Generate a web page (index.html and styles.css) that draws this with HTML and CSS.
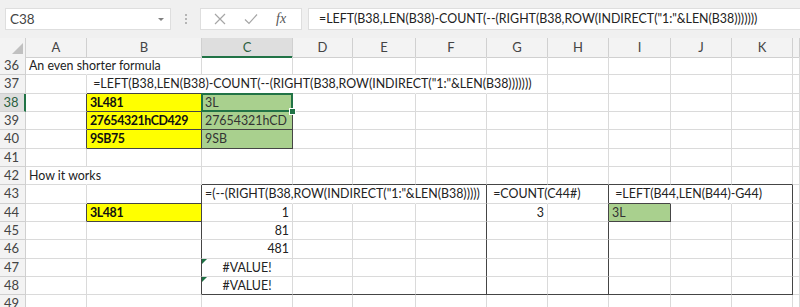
FILE: index.html
```html
<!DOCTYPE html>
<html lang="en">
<head>
    <meta charset="utf-8">
    <title>Sheet</title>
    <link rel="stylesheet" href="styles.css">
</head>
<body>
    <!-- formula bar -->
    <div class="formula-bar">
        <div class="name-box"><span>C38</span><span class="drop"></span></div>
        <div class="grip"><i></i><i></i><i></i></div>
        <div class="fx-box">
            <svg width="12" height="12" viewBox="0 0 12 12"><path d="M1 1L11 11M11 1L1 11" stroke="#a6a6a6" stroke-width="1.2" fill="none"/></svg>
            <svg width="14" height="12" viewBox="0 0 14 12"><path d="M1 6.5L5 10.5L13 1.5" stroke="#a6a6a6" stroke-width="1.2" fill="none"/></svg>
            <span class="fx">fx</span>
        </div>
        <div class="formula">=LEFT(B38,LEN(B38)-COUNT(--(RIGHT(B38,ROW(INDIRECT("1:"&amp;LEN(B38)))))))</div>
    </div>

    <!-- grid -->
    <div class="sheet">
        <div class="row head">
            <div class="corner"></div><div>A</div><div>B</div><div class="hsel">C</div><div>D</div><div>E</div><div>F</div><div>G</div><div>H</div><div>I</div><div>J</div><div>K</div><div></div>
        </div>
        <div class="row">
            <div class="h">36</div><div class="nr">An even shorter formula</div><div></div><div></div><div></div><div></div><div></div><div></div><div></div><div></div><div></div><div></div><div></div>
        </div>
        <div class="row">
            <div class="h">37</div><div></div><div class="nr db"> =LEFT(B38,LEN(B38)-COUNT(--(RIGHT(B38,ROW(INDIRECT("1:"&amp;LEN(B38)))))))</div><div class="nr db"></div><div class="nr"></div><div class="nr"></div><div class="nr"></div><div></div><div></div><div></div><div></div><div></div><div></div>
        </div>
        <div class="row">
            <div class="h hsel">38</div><div class="dr"></div><div class="y b dr db">3L481</div><div class="g dr db sel">3L</div><div></div><div></div><div></div><div></div><div></div><div></div><div></div><div></div><div></div>
        </div>
        <div class="row">
            <div class="h">39</div><div class="dr"></div><div class="y b dr db">27654321hCD429</div><div class="g dr db">27654321hCD</div><div></div><div></div><div></div><div></div><div></div><div></div><div></div><div></div><div></div>
        </div>
        <div class="row">
            <div class="h">40</div><div class="dr"></div><div class="y b dr db">9SB75</div><div class="g dr db">9SB</div><div></div><div></div><div></div><div></div><div></div><div></div><div></div><div></div><div></div>
        </div>
        <div class="row">
            <div class="h">41</div><div></div><div></div><div></div><div></div><div></div><div></div><div></div><div></div><div></div><div></div><div></div><div></div>
        </div>
        <div class="row">
            <div class="h">42</div><div class="nr">How it works</div><div></div><div class="db"></div><div class="db"></div><div class="db"></div><div class="db"></div><div class="db"></div><div class="db"></div><div class="db"></div><div class="db"></div><div class="db"></div><div></div>
        </div>
        <div class="row">
            <div class="h">43</div><div></div><div class="dr db"></div><div class="nr">=(--(RIGHT(B38,ROW(INDIRECT("1:"&amp;LEN(B38)))))</div><div class="nr"></div><div class="nr"></div><div class="dr"></div><div class="nr"> =COUNT(C44#)</div><div class="dr"></div><div class="nr db"> =LEFT(B44,LEN(B44)-G44)</div><div class="nr"></div><div class="dr"></div><div></div>
        </div>
        <div class="row">
            <div class="h">44</div><div class="dr"></div><div class="y b dr db">3L481</div><div class="r">1</div><div></div><div></div><div class="dr"></div><div class="r">3</div><div class="dr"></div><div class="g dr db">3L</div><div></div><div class="dr"></div><div></div>
        </div>
        <div class="row">
            <div class="h">45</div><div></div><div class="dr"></div><div class="r">81</div><div></div><div></div><div class="dr"></div><div></div><div class="dr"></div><div></div><div></div><div class="dr"></div><div></div>
        </div>
        <div class="row">
            <div class="h">46</div><div></div><div class="dr"></div><div class="r">481</div><div></div><div></div><div class="dr"></div><div></div><div class="dr"></div><div></div><div></div><div class="dr"></div><div></div>
        </div>
        <div class="row">
            <div class="h">47</div><div></div><div class="dr"></div><div class="ctr err">#VALUE!</div><div></div><div></div><div class="dr"></div><div></div><div class="dr"></div><div></div><div></div><div class="dr"></div><div></div>
        </div>
        <div class="row">
            <div class="h">48</div><div></div><div class="dr"></div><div class="ctr err db">#VALUE!</div><div class="db"></div><div class="db"></div><div class="dr db"></div><div class="db"></div><div class="dr db"></div><div class="db"></div><div class="db"></div><div class="dr db"></div><div></div>
        </div>
        <div class="row">
            <div class="h">49</div><div></div><div></div><div></div><div></div><div></div><div></div><div></div><div></div><div></div><div></div><div></div><div></div>
        </div>
    </div>
</body>
</html>
```

FILE: styles.css
```css
body {
    margin: 0;
    font-family: Lato, "Liberation Sans", sans-serif;
    font-size: 12.4px;
    color: #222;
    background: #fff;
    overflow: hidden;
}

/* formula bar */
.formula-bar {
    height: 38px;
    box-sizing: border-box;
    background: #f0f0f0;
    display: flex;
    align-items: flex-start;
    padding: 8px 0 0 5px;
}
.name-box {
    width: 166px;
    height: 22px;
    box-sizing: border-box;
    background: #fff;
    border: 1px solid #dedede;
    display: flex;
    align-items: center;
    justify-content: space-between;
    padding: 0 6px 0 4px;
    color: #444;
    font-size: 13.5px;
}
.drop {
    width: 0;
    height: 0;
    border-left: 3px solid transparent;
    border-right: 3px solid transparent;
    border-top: 3px solid #808080;
}
.grip {
    width: 29px;
    display: flex;
    flex-direction: column;
    align-items: center;
    gap: 2px;
    padding-top: 6px;
}
.grip i {
    width: 2px;
    height: 2px;
    background: #b5b5b5;
}
.fx-box {
    width: 102px;
    height: 22px;
    box-sizing: border-box;
    background: #fff;
    border: 1px solid #dedede;
    display: flex;
    align-items: center;
    gap: 18px;
    padding-left: 13px;
}
.fx {
    font-family: "Liberation Serif", serif;
    font-style: italic;
    font-size: 14px;
    color: #555;
}
.formula {
    flex: 1;
    height: 22px;
    box-sizing: border-box;
    margin-left: 6px;
    background: #fff;
    border: 1px solid #dedede;
    border-right: none;
    padding-left: 10px;
    line-height: 20px;
    white-space: nowrap;
    color: #222;
}

/* sheet */
.row {
    display: grid;
    grid-template-columns: 26px 61px 115px 91px 60px 63px 71px 61px 61px 62px 61px 61px 1fr;
    height: 18.33px;
}
.row > div {
    position: relative;
    box-sizing: border-box;
    border-right: 1px solid #dadada;
    border-bottom: 1px solid #dadada;
    padding: 0 3px;
    line-height: 17px;
    white-space: pre;
}
.row.head {
    height: 19px;
    background: #f3f3f3;
}
.row.head > div {
    text-align: center;
    color: #444;
    border-color: #d0d0d0;
    line-height: 18px;
    font-size: 13px;
}
.corner::after {
    content: "";
    position: absolute;
    right: 2px;
    bottom: 3px;
    border-left: 11px solid transparent;
    border-bottom: 11px solid #c0c0c0;
}
.row > .h {
    background: #f3f3f3;
    color: #444;
    text-align: center;
    padding: 0 2px 0 0;
    border-color: #d0d0d0;
    font-size: 13px;
}
.row.head > .hsel {
    background: #dedede;
    border-bottom: 2px solid #217346;
    color: #2b5f3e;
}
.row > .h.hsel {
    background: #dedede;
    border-right: 2px solid #217346;
    color: #2b5f3e;
}

/* cell formats */
.row > .nr { border-right-color: transparent; }
.row > .dr { border-right-color: #454545; }
.row > .db { border-bottom-color: #454545; }
.y { background: #ffff00; }
.g { background: #a9d08e; color: #333; }
.b { font-weight: bold; color: #111; letter-spacing: -0.4px; }
.r { text-align: right; }
.ctr { text-align: center; }
.err::before {
    content: "";
    position: absolute;
    left: 0;
    top: 0;
    border-top: 5px solid #1e7145;
    border-right: 5px solid transparent;
}
.sel::after {
    content: "";
    position: absolute;
    left: -1px;
    top: -1px;
    right: -1px;
    bottom: -1px;
    border: 2px solid #217346;
}
.sel::before {
    content: "";
    position: absolute;
    right: -4px;
    bottom: -4px;
    width: 5px;
    height: 5px;
    background: #217346;
    border: 1px solid #fff;
    z-index: 2;
}
```
